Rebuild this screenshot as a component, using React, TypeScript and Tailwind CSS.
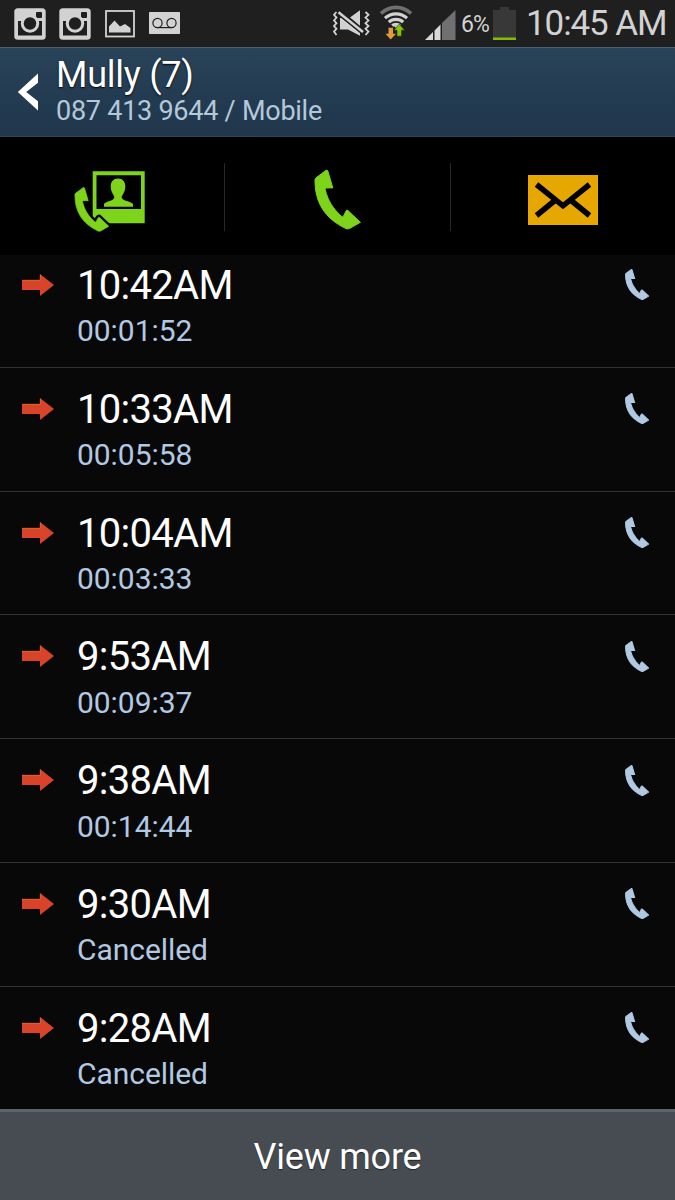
import React from 'react';

const calls = [
  { time: '10:42AM', detail: '00:01:52' },
  { time: '10:33AM', detail: '00:05:58' },
  { time: '10:04AM', detail: '00:03:33' },
  { time: '9:53AM', detail: '00:09:37' },
  { time: '9:38AM', detail: '00:14:44' },
  { time: '9:30AM', detail: 'Cancelled' },
  { time: '9:28AM', detail: 'Cancelled' }
];

const HANDSET =
  'M1 11 Q1 9.6 2 8.8 L12 1.4 Q13.2 .6 13.8 2 L18.8 18.9 L12.5 18.9 Q11 19 11.2 20.5 C14 32 19 39.5 27.2 47 Q28.6 48.3 29.6 47 L32 42 Q32.8 40.4 34 41.6 L46.4 53.3 L35.5 59.5 Q34 60.2 32 59.6 C10 49 1 33 1 11z';

function Handset({ className }: { className?: string }) {
  return (
    <svg viewBox="0 0 47 61" className={className} fill="currentColor" stroke="currentColor">
      <path d={HANDSET} />
    </svg>
  );
}

function InstagramIcon() {
  return (
    <svg viewBox="0 0 32 32" className="h-8 w-8">
      <rect x="0.3" y="0.3" width="31.4" height="31.4" rx="3.5" fill="#d2d2d2" />
      <rect x="22" y="4" width="6" height="6" rx="1" fill="#1f1f1f" />
      <path d="M4 13v14.5h24V13h-3.2v1.6a8.8 8.8 0 0 1-17.6 0V13z" fill="#1f1f1f" />
      <circle cx="16" cy="15.5" r="9.2" fill="#d2d2d2" />
      <circle cx="16" cy="15.5" r="6.2" fill="#1f1f1f" />
    </svg>
  );
}

function StatusBar() {
  return (
    <div className="flex h-[47px] shrink-0 items-start justify-between bg-[#1f1f1f] text-[#d2d2d2]">
      <div className="flex pl-[14px] pt-2">
        <InstagramIcon />
        <div className="ml-[13px]">
          <InstagramIcon />
        </div>
        <svg viewBox="0 0 30 28" className="ml-[14px] mt-[2px] h-7 w-[30px]">
          <rect x="1" y="1" width="28" height="25.5" fill="none" stroke="#d2d2d2" strokeWidth="1.8" />
          <path d="M4 22.5v-6l5.5-6 5.5 6 5-2.5 5.5 4v4.5z" fill="#d2d2d2" />
        </svg>
        <svg viewBox="0 0 31 22" className="ml-[14px] mt-[4px] h-[22px] w-[31px]">
          <rect width="31" height="22" rx="0.8" fill="#d2d2d2" />
          <g fill="none" stroke="#1f1f1f" strokeWidth="1.2">
            <circle cx="8.5" cy="11" r="4.6" />
            <circle cx="22.5" cy="11" r="4.6" />
            <path d="M8.5 15.6h14" />
          </g>
        </svg>
      </div>
      <div className="flex">
        <svg viewBox="0 0 38 28" className="mt-[10px] h-7 w-[38px]">
          <g fill="none" stroke="#d2d2d2" strokeWidth="1.8">
            <path d="M3.5 2 1 4.8 3.5 7.6 1 10.4 3.5 13.2 1 16 3.5 18.8 1 21.6 3.5 25" />
            <path d="M32.5 2 35.5 4.8 32.5 7.6 35.5 10.4 32.5 13.2 35.5 16 32.5 18.8 35.5 21.6 32.5 25" />
          </g>
          <path d="M17 7.5 27 .3V16z" fill="#d2d2d2" />
          <path d="M7 8v11.5h8L27 25.8V22L8.5 8z" fill="#d2d2d2" />
          <path d="M5 1.5 31 22.8" stroke="#1f1f1f" strokeWidth="5.5" />
          <path d="M5.5 2.2 30 22" stroke="#d2d2d2" strokeWidth="2.6" />
        </svg>
        <svg viewBox="0 0 34 36" className="ml-[8px] mt-[5px] h-9 w-[34px]" fill="none">
          <path d="M2 8.5a21.5 21.5 0 0 1 30 0" stroke="#707070" strokeWidth="3.8" />
          <g stroke="#d2d2d2" strokeWidth="3.2">
            <path d="M6 13.2a16 16 0 0 1 22 0" />
            <path d="M9.8 17.2a10.5 10.5 0 0 1 14.4 0" />
            <path d="M13.2 20.6a6 6 0 0 1 7.6 0" />
          </g>
          <path d="M14.5 20.5h5L17 23z" fill="#d2d2d2" />
          <path d="M9.5 22.8h4.500v6h3L11.700 34.500 6.500 28.800h3z" fill="#e29a3c" />
          <path d="M18 31.200h4.500v-6h3.200L20.300 19 15 25.200h3z" fill="#84c400" stroke="#1f1f1f" strokeWidth="0.5" />
        </svg>
        <svg viewBox="0 0 31 31" className="ml-[12px] mt-[9px] h-[31px] w-[31px]">
          <path d="M0 31 8 23v8z M9.5 21.5 15.5 15.5V31h-6z" fill="#d8d8d8" />
          <path d="M17 14 30.5 1v30H17z" fill="#707070" />
        </svg>
        <span className="ml-[5px] mt-[9px] w-[31px] whitespace-nowrap text-[23px] leading-8 tracking-[-1px]">6%</span>
        <svg viewBox="0 0 23 33" className="ml-[1px] mt-[7px] h-[33px] w-[23px]">
          <path d="M0 3h7V0h9v3h7v30H0z" fill="#383838" />
          <path d="M0 30.5h23v2.5H0z" fill="#84bd00" />
        </svg>
        <span className="ml-[10px] mt-[4px] w-[149px] whitespace-nowrap text-[35px] leading-10 tracking-[-1.1px]">10:45 AM</span>
      </div>
    </div>
  );
}

function Header() {
  return (
    <div className="flex h-[90px] shrink-0 border-b border-t border-b-[#2b4355] border-t-[#4a6070] bg-gradient-to-b from-[#294359] to-[#1f364b]">
      <svg viewBox="0 0 21 38" className="ml-[17px] mt-[25px] h-[38px] w-[21px]">
        <path d="M21 0.5v9.2L9.2 19 21 28.3v9.2L0.8 19z" fill="#fff" />
      </svg>
      <div className="ml-[18px] pt-[6px]">
        <h1 className="text-[36px] leading-[42px] tracking-[-0.25px] text-white [text-shadow:0_1px_2px_#000]">Mully (7)</h1>
        <p className="-mt-px text-[27px] leading-[32px] tracking-[-0.25px] text-[#b4c8d9]">087 413 9644 / Mobile</p>
      </div>
    </div>
  );
}

function Actions() {
  return (
    <div className="flex h-[118px] shrink-0 items-center bg-black pt-[2px] text-[#7ed31b]">
      <div className="flex h-[68px] w-[225px] items-center justify-center border-r border-[#292929]">
        <svg viewBox="0 0 72 62" className="ml-[-4px] mt-[7px] h-[62px] w-[72px]" fill="currentColor">
          <path d="M18.7 1.2h52v52h-52z" />
          <path d="M22.5 5.2h44.5v33.8H22.5z" fill="#000" />
          <path d="M30 36.7v-2.4c0-2.4 9.2-3.3 10.2-6.3.8-2.4-3.5-5-3.5-11.5 0-5 2.7-8 7.3-8s7.3 3 7.3 8c0 6.5-4.3 9.1-3.5 11.5 1 3 11.2 3.9 11.2 6.3v2.4z" />
          <g transform="translate(0.2 16.6) scale(.745)">
            <path d={HANDSET} fill="#000" stroke="#000" strokeWidth="7" strokeLinejoin="round" />
            <path d={HANDSET} stroke="currentColor" />
          </g>
        </svg>
      </div>
      <div className="flex h-[68px] w-[226px] items-center justify-center border-r border-[#292929]">
        <Handset className="mt-[5px] h-[61px] w-[47px]" />
      </div>
      <div className="flex flex-1 justify-center">
        <svg viewBox="0 0 70 50" className="mt-[5px] h-[50px] w-[70px]">
          <rect width="70" height="50" fill="#e5a700" />
          <g fill="none" stroke="#000" strokeWidth="5.5">
            <path d="M8.5 9.5 35 30.8 61.5 9.5" />
            <path d="M8.5 40.5 27.5 25 M61.5 40.5 42.5 25" />
          </g>
        </svg>
      </div>
    </div>
  );
}

function CallRow({ time, detail }: { time: string; detail: string }) {
  return (
    <li className="flex h-[123.8px] shrink-0 border-b border-[#333] pl-[22px]">
      <svg viewBox="0 0 32 22" className="mt-[30px] h-[22px] w-8">
        <path d="M0 6h18V0l14 11-14 11v-6H0z" fill="#d8432a" />
        <path d="M0 6.3h18.3V.6" fill="none" stroke="#d9741f" strokeWidth="0.8" />
      </svg>
      <div className="ml-[23px] flex-1 pt-[18px]">
        <div className="text-[40px] leading-[48px] tracking-[-0.7px] text-white">{time}</div>
        <div className="mt-[3.5px] text-[30px] leading-9 tracking-[-0.05px] text-[#b1c9e3]">{detail}</div>
      </div>
      <Handset className="mr-[26px] mt-[25.5px] h-[31px] w-6 stroke-2 text-[#b1c9e3]" />
    </li>
  );
}

export default function App() {
  return (
    <div className="flex h-[1200px] w-[675px] flex-col overflow-hidden bg-[#080808] font-['Roboto',sans-serif]">
      <StatusBar />
      <Header />
      <Actions />
      {/* the list is scrolled a little under the action bar */}
      <div className="flex min-h-0 flex-1 flex-col overflow-hidden">
        <ul className="-mt-[11.1px] flex flex-col">
          {calls.map((call) => (
            <CallRow key={call.time} {...call} />
          ))}
        </ul>
      </div>
      <button className="h-[91px] shrink-0 border-t-[3px] border-[#5c646e] bg-[#464c52] pt-[2px] text-[36px] tracking-[-0.2px] text-white [text-shadow:0_1px_1px_#222]">
        View more
      </button>
    </div>
  );
}
